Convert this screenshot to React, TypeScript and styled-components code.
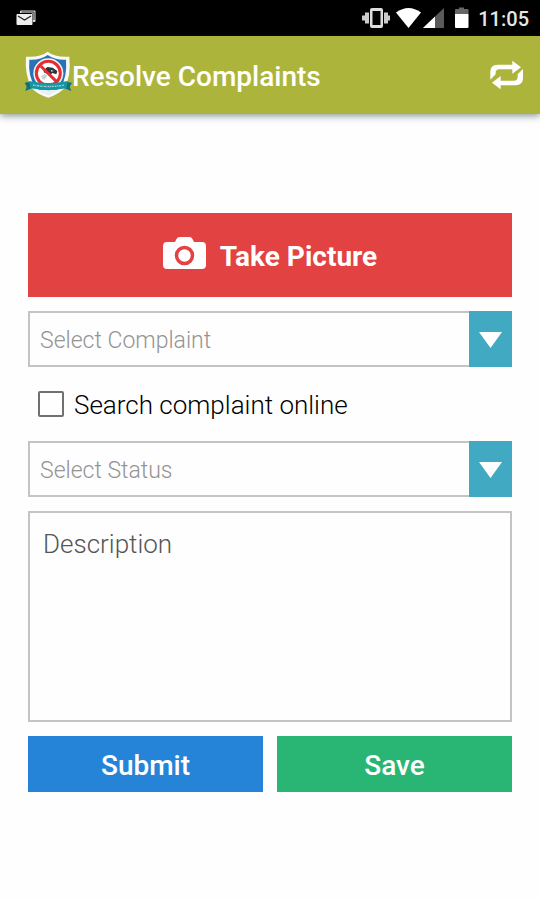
import React from "react";
import styled, { createGlobalStyle } from "styled-components";

const GlobalStyle = createGlobalStyle`
  *, *::before, *::after { box-sizing: border-box; }
  body { margin: 0; background: #fefefe; font-family: Roboto, sans-serif; }
  button, select, textarea, input { font-family: inherit; }
`;

const Screen = styled.div`
  min-height: 100vh;
  display: flex;
  flex-direction: column;
`;

const StatusBar = styled.div`
  display: flex;
  align-items: center;
  justify-content: space-between;
  height: 36px;
  padding: 0 11px 0 16px;
  background: #000;
  color: #e6e6e6;
`;

const StatusIcons = styled.div`
  display: flex;
  align-items: center;
`;

const Clock = styled.time`
  margin-left: 9px;
  padding-top: 2px;
  font-size: 20px;
  font-weight: 500;
  line-height: 24px;
`;

const AppBar = styled.header`
  display: flex;
  align-items: center;
  height: 78px;
  padding: 0 16px 0 24px;
  background: #adb43b;
  box-shadow: 0 2px 7px rgba(30, 50, 60, 0.5);
`;

const Title = styled.h1`
  flex: 1;
  margin: 0;
  padding-top: 4px;
  color: #fff;
  font-size: 28px;
  font-weight: 500;
  line-height: 36px;
`;

const IconButton = styled.button`
  display: flex;
  padding: 0;
  border: 0;
  background: none;
  cursor: pointer;
`;

const Form = styled.form`
  display: flex;
  flex-direction: column;
  gap: 14px;
  padding: 99px 28px 28px;
`;

const ActionButton = styled.button<{ $color: string; $tall?: boolean }>`
  display: flex;
  flex: 1;
  align-items: center;
  justify-content: center;
  gap: 14px;
  min-height: ${(p) => (p.$tall ? 84 : 56)}px;
  padding: 4px 12px 0;
  border: 0;
  background: ${(p) => p.$color};
  color: #fff;
  font-size: 28px;
  font-weight: ${(p) => (p.$tall ? 700 : 500)};
  line-height: 32px;
  cursor: pointer;
`;

const Picker = styled.div`
  display: grid;
  grid-template-columns: 1fr 43px;
  height: 56px;
`;

const Select = styled.select`
  grid-area: 1 / 1 / 2 / 3;
  appearance: none;
  width: 100%;
  padding: 2px 54px 0 10px;
  border: 2px solid #c4c4c4;
  border-radius: 0;
  background: #fefefe;
  color: #949494;
  font-size: 23px;
  font-weight: 300;
`;

const PickerArrow = styled.span`
  grid-area: 1 / 2;
  z-index: 1;
  display: flex;
  align-items: center;
  justify-content: center;
  padding-top: 2px;
  background: #41aac2;
  pointer-events: none;
`;

const CheckRow = styled.label`
  display: flex;
  align-items: center;
  gap: 10px;
  height: 46px;
  padding-left: 10px;
  color: #000;
  font-size: 26px;
  font-weight: 300;
  line-height: 30px;
  cursor: pointer;
`;

const CheckText = styled.span`
  padding-top: 2px;
`;

const Checkbox = styled.input`
  appearance: none;
  width: 26px;
  height: 26px;
  margin: 0;
  border: 2px solid #707070;
  border-radius: 2px;
  &:checked {
    background: #41aac2;
  }
`;

const Description = styled.textarea`
  display: block;
  width: 100%;
  height: 211px;
  padding: 16px 13px;
  border: 2px solid #c4c4c4;
  border-radius: 0;
  background: #fefefe;
  color: #333;
  font-size: 26px;
  font-weight: 300;
  line-height: 30px;
  resize: none;
  &::placeholder {
    color: #555;
    opacity: 1;
  }
`;

const Actions = styled.div`
  display: flex;
  gap: 14px;
`;

const MailIcon = () => (
  <svg width="20" height="16" viewBox="0 0 20 16" aria-hidden="true">
    <path d="M4 3V1.500Q4 .5 5 .5h13.500q1 0 1 1V11q0 1-1 1H17V5q0-2-2-2z" fill="#ddd" />
    <path d="M5.500 2H18v8" fill="none" stroke="#222" />
    <rect x=".5" y="4" width="16" height="11" rx="1" fill="#eee" />
    <path d="M2 6l6.500 4L15 6" fill="none" stroke="#222" strokeWidth="1.200" />
  </svg>
);

const SystemIcons = () => (
  <svg width="108" height="22" viewBox="362 7 108 22" role="img" aria-label="Vibrate, Wi-Fi, signal and battery">
    <path
      d="M373 8h9q2 0 2 2v16q0 2-2 2h-9q-2 0-2-2V10q0-2 2-2zm.500 3v14h8V11z"
      fill="#ddd"
      fillRule="evenodd"
    />
    <path d="M366 12.500h4v11h-4zM385 12.500h4v11h-4zM363 15.500h3v5h-3zM391 15.500h-2v5h2z" fill="#ccc" />
    <path d="M397 12.500Q409.500 3.500 422 12.500L409.500 28z" fill="#fff" />
    <path d="M424 28L445 8v20z" fill="#5a5a5a" />
    <path d="M424 28L436 16.500V28z" fill="#fff" />
    <path d="M456 14V10q0-1 1-1h3V7.500h5V9h3.500q1 0 1 1v4z" fill="#666" />
    <path d="M456 14h13.500v13q0 1-1 1H457q-1 0-1-1z" fill="#fff" />
  </svg>
);

const ShieldLogo = () => (
  <svg width="48" height="48" viewBox="24 34 144 144" aria-hidden="true">
    <path
      d="M95 36Q118 54 160 51Q166 112 144 147Q124 165 97 174Q67 165 49 147Q25 109 30 51Q72 54 95 36z"
      fill="#f7faf7"
    />
    <path
      d="M95 46Q118 62 150 60Q154 112 134 142Q119 157 97 165Q73 157 57 140Q36 111 40 60Q73 62 95 46z"
      fill="#2872b5"
    />
    <path d="M66 150h61l-11 9-19 8-19-8z" fill="#e9f1f5" />
    <circle cx="97" cy="101" r="45" fill="#f3f6f8" />
    <circle cx="97" cy="101" r="36" fill="#fff" stroke="#e32d31" strokeWidth="9" />
    <path d="M84 91l10-9 16 2 14 10-3 10-12-4-6 5-8-2-12-5z" fill="#283439" />
    <path d="M76 110l10-8 8 6-8 12-8-2zM104 90l10 4-8 2z" fill="#c8d5d6" />
    <path d="M74 79l47 46" stroke="#e32d31" strokeWidth="9" />
    <path d="M26 129l17-3 4 20-19 8 4-13zM168 129l-18-3-4 20 20 8-5-13z" fill="#0d7180" />
    <path d="M39 124Q96 136 156 124L151 146Q97 157 44 146z" fill="#1696a3" />
    <path d="M51 136Q97 145 145 136" fill="none" stroke="#9bd0d0" strokeWidth="4" strokeDasharray="5 2 3 2 7 3" />
  </svg>
);

const SyncIcon = () => (
  <svg width="35" height="30" viewBox="416 178 105 90" aria-hidden="true">
    <path
      d="M420 237V214Q420 192 442 192H486V180L512 200L486 219V206H447Q436 206 436 217V221Z"
      fill="#fff"
    />
    <path
      d="M518 205V232Q518 254 496 254H451V266L425 246L451 226V240H491Q502 240 502 229V221Z"
      fill="#fff"
    />
  </svg>
);

const CameraIcon = () => (
  <svg width="43" height="40" viewBox="0 0 43 40" aria-hidden="true">
    <path
      d="M4 5h8l1.500-3q1-2 3-2h10q2 0 3 2L31 5h8q4 0 4 4v19q0 4-4 4H4q-4 0-4-4V9q0-4 4-4z"
      fill="#fff"
    />
    <circle cx="21.500" cy="18.500" r="8" fill="none" stroke="#e34242" strokeWidth="3.500" />
  </svg>
);

const ComplaintPicker = ({ label, options }: { label: string; options: string[] }) => (
  <Picker>
    <Select aria-label={label} defaultValue="">
      <option value="">{label}</option>
      {options.map((option) => (
        <option key={option}>{option}</option>
      ))}
    </Select>
    <PickerArrow>
      <svg width="23" height="16" viewBox="0 0 23 16" aria-hidden="true">
        <path d="M0 0h23L11.500 16z" fill="#fff" />
      </svg>
    </PickerArrow>
  </Picker>
);

export default function App() {
  return (
    <Screen>
      <GlobalStyle />
      <StatusBar>
        <MailIcon />
        <StatusIcons>
          <SystemIcons />
          <Clock>11:05</Clock>
        </StatusIcons>
      </StatusBar>
      <AppBar>
        <ShieldLogo />
        <Title>Resolve Complaints</Title>
        <IconButton type="button" aria-label="Refresh">
          <SyncIcon />
        </IconButton>
      </AppBar>
      <Form onSubmit={(event) => event.preventDefault()}>
        <ActionButton type="button" $color="#e34242" $tall>
          <CameraIcon />
          Take Picture
        </ActionButton>
        <ComplaintPicker label="Select Complaint" options={[]} />
        <CheckRow>
          <Checkbox type="checkbox" />
          <CheckText>Search complaint online</CheckText>
        </CheckRow>
        <ComplaintPicker label="Select Status" options={[]} />
        <Description aria-label="Description" placeholder="Description" />
        <Actions>
          <ActionButton type="submit" $color="#2584d8">
            Submit
          </ActionButton>
          <ActionButton type="button" $color="#29b573">
            Save
          </ActionButton>
        </Actions>
      </Form>
    </Screen>
  );
}
